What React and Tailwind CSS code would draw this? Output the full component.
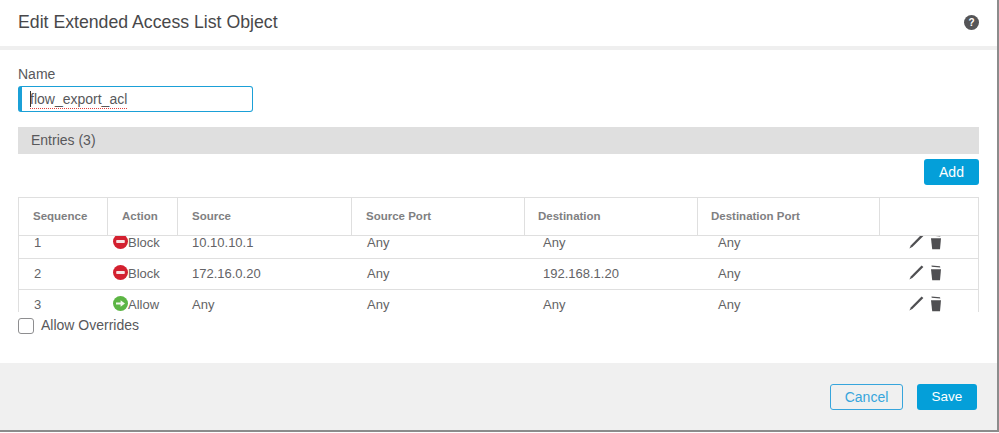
import React from 'react'

const font = { fontFamily: '"Liberation Sans", Arial, sans-serif' }

const columns = [
  { label: 'Sequence', cell: 'w-[89px] pl-[14px]' },
  { label: 'Action', cell: 'w-[70px] pl-[14px]' },
  { label: 'Source', cell: 'w-[174px] pl-[14px]' },
  { label: 'Source Port', cell: 'w-[173px] pl-[14px]' },
  { label: 'Destination', cell: 'w-[173px] pl-[13px]' },
  { label: 'Destination Port', cell: 'w-[182px] pl-[13px]' },
  { label: '', cell: 'flex-1' },
]

const rows = [
  { seq: '1', action: 'Block', source: '10.10.10.1', sourcePort: 'Any', dest: 'Any', destPort: 'Any' },
  { seq: '2', action: 'Block', source: '172.16.0.20', sourcePort: 'Any', dest: '192.168.1.20', destPort: 'Any' },
  { seq: '3', action: 'Allow', source: 'Any', sourcePort: 'Any', dest: 'Any', destPort: 'Any' },
]

const ActionIcon = ({ action }) =>
  action === 'Block' ? (
    <svg width="15" height="15" viewBox="0 0 15 15" className="shrink-0">
      <circle cx="7.5" cy="7.5" r="7.5" fill="#d3202f" />
      <rect x="3.2" y="6" width="8.6" height="3" rx="0.8" fill="#f7e4e4" />
    </svg>
  ) : (
    <svg width="15" height="15" viewBox="0 0 15 15" className="shrink-0">
      <circle cx="7.5" cy="7.5" r="7.5" fill="#5cb544" />
      <path d="M3 6.5h4.6V4.2l4.4 3.3-4.4 3.3V8.5H3z" fill="#f4f8ee" />
    </svg>
  )

const PencilIcon = () => (
  <svg width="15" height="15" viewBox="0 0 15 15">
    <path d="M12.6 0.4l1.8 1.6L3.6 12.8l-3.2 1.8 1.6-3.4z" fill="#4f4f52" />
  </svg>
)

const TrashIcon = () => (
  <svg width="12" height="16" viewBox="0 0 12 16">
    <path d="M1.5 0.4l8.5 0.8.3 1.2-8.6-.7z" fill="#4f4f52" />
    <path d="M1 4.2h10l-1 11H2.2z" fill="#4f4f52" />
  </svg>
)

const Row = ({ row }) => (
  <div className="flex h-[31px] border-b border-[#dfdfdf] text-[13px] text-[#636366]">
    <div className="w-[89px] pl-[15px] pt-[5px]">{row.seq}</div>
    <div className="flex w-[70px] items-start pl-[5px] pt-[6px]">
      <ActionIcon action={row.action} />
      <span className="mt-[2px] leading-[13px]">{row.action}</span>
    </div>
    <div className="w-[174px] pl-[14px] pt-[5px]">{row.source}</div>
    <div className="w-[173px] pl-[15px] pt-[5px]">{row.sourcePort}</div>
    <div className="w-[173px] pl-[18px] pt-[5px]">{row.dest}</div>
    <div className="w-[182px] pl-[20px] pt-[5px]">{row.destPort}</div>
    <div className="flex flex-1 items-start gap-[6px] pl-[29px] pt-[6px]">
      <PencilIcon />
      <TrashIcon />
    </div>
  </div>
)

export default function App() {
  return (
    <div style={font} className="h-[433px] w-[999px] overflow-hidden bg-white">
      <div className="flex h-[432px] w-[999px] flex-col border-r-2 border-b-2 border-[#8c8c8c]">
        {/* title bar */}
        <div className="flex h-[46px] shrink-0 items-center justify-between pb-[2px] pl-[18px] pr-[18px]">
          <h1 className="text-[17.7px] text-[#48484a]">Edit Extended Access List Object</h1>
          <div className="flex h-[15px] w-[15px] items-center justify-center rounded-full bg-[#555557] text-[10px] font-bold text-white">
            ?
          </div>
        </div>
        <div className="h-[4px] shrink-0 bg-[#efefef]" />

        {/* body */}
        <div className="flex flex-1 flex-col px-[18px] pt-[14px]">
          <label className="text-[14px] leading-[20px] text-[#58585b]">Name</label>
          <div className="relative mt-[2px] h-[26px] w-[235px]">
            <input
              readOnly
              value="flow_export_acl"
              className="h-full w-full rounded-[3px] border border-l-[4px] border-[#1ba0d7] pl-[8px] text-[14px] text-[#58585b] outline-none"
            />
            <div className="absolute left-[12px] top-[5px] h-[16px] w-px bg-[#333333]" />
            {/* spellcheck squiggle */}
            <div className="absolute left-[12px] top-[22px] w-[97px] border-b border-dotted border-[#e0403f]" />
          </div>

          <div className="mt-[15px] flex h-[27px] items-center bg-[#dfdfdf] pl-[13px] text-[14px] text-[#58585b]">
            Entries (3)
          </div>

          <div className="mt-[5px] flex justify-end">
            <button className="h-[26px] w-[55px] rounded-[3px] bg-[#049fd9] text-[14px] font-normal text-white">
              Add
            </button>
          </div>

          {/* entries table */}
          <div className="mt-[12px] h-[115px] w-[961px] overflow-hidden border-x border-[#dfdfdf]">
            <div className="flex h-[39px] border-y border-[#dfdfdf] text-[11.5px] font-bold text-[#7f7f82]">
              {columns.map((col, i) => (
                <div
                  key={i}
                  className={`${col.cell} flex items-center ${i < columns.length - 1 ? 'border-r border-[#dfdfdf]' : ''}`}
                >
                  {col.label}
                </div>
              ))}
            </div>
            <div className="h-[76px] overflow-hidden">
              <div className="-mt-[8px]">
                {rows.map((row) => (
                  <Row key={row.seq} row={row} />
                ))}
              </div>
            </div>
          </div>

          <label className="mt-[3px] flex items-center gap-[7px] text-[14px] text-[#58585b]">
            <span className="h-[16px] w-[16px] rounded-[3px] border border-[#8e8e90] bg-white" />
            Allow Overrides
          </label>
        </div>

        {/* footer */}
        <div className="flex h-[67px] shrink-0 items-start justify-end gap-[14px] bg-[#f0f0f0] pr-[20px] pt-[21px]">
          <button className="h-[26px] w-[73px] rounded-[3px] border border-[#36a5dc] text-[14px] text-[#36a5dc]">
            Cancel
          </button>
          <button className="h-[26px] w-[60px] rounded-[3px] bg-[#049fd9] text-[13.5px] text-white">
            Save
          </button>
        </div>
      </div>
    </div>
  )
}
